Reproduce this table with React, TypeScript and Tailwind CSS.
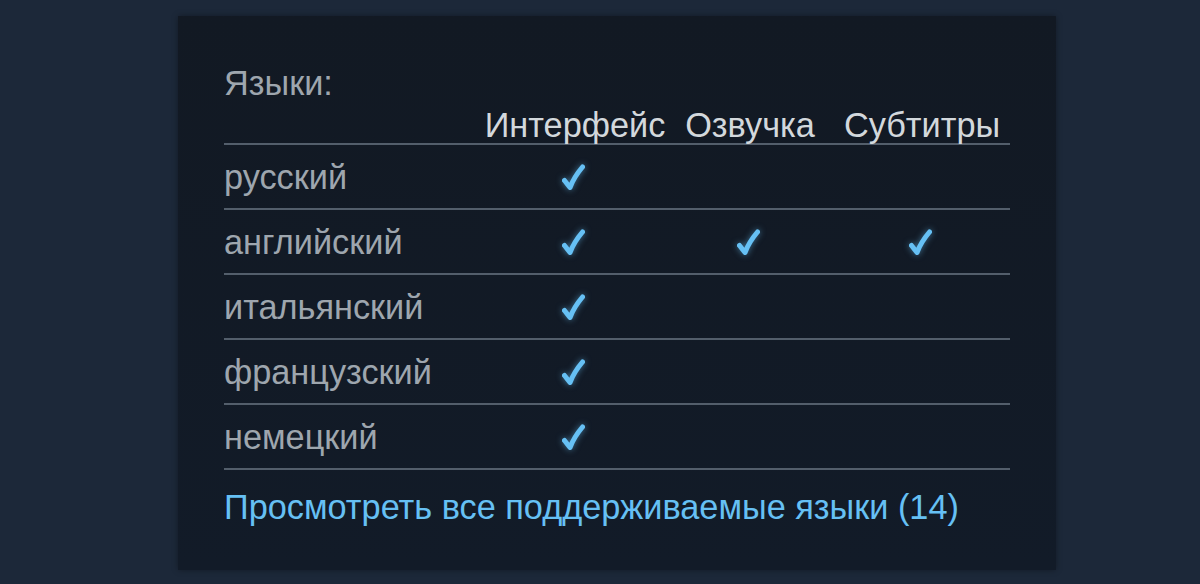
const languages = [
  { name: "русский", ui: true, voice: false, subs: false },
  { name: "английский", ui: true, voice: true, subs: true },
  { name: "итальянский", ui: true, voice: false, subs: false },
  { name: "французский", ui: true, voice: false, subs: false },
  { name: "немецкий", ui: true, voice: false, subs: false },
];

function Check() {
  return (
    <svg
      width="26"
      height="28"
      viewBox="0 0 26 28"
      className="drop-shadow-[0_0_3px_rgba(102,192,244,0.55)]"
    >
      <path
        d="M4.5 17.5 L10 24.5 Q14 14 22.5 4"
        fill="none"
        stroke="#66c0f4"
        strokeWidth="5"
        strokeLinecap="round"
        strokeLinejoin="round"
      />
    </svg>
  );
}

export default function App() {
  return (
    <div className="w-full h-[584px] bg-[#1c2839] pt-[16px] font-['Liberation_Sans',Arial,sans-serif]">
      <div className="ml-[178px] w-[878px] h-[554px] bg-gradient-to-b from-[#121923] to-[#121b28] shadow-[0_0_6px_rgba(0,0,0,0.35)] px-[46px] pt-[47px]">
        <div className="text-[34.3px] leading-[40px] text-[#9ea6ae]">Языки:</div>

        <div className="mt-[2px] grid grid-cols-[256px_190px_160px_180px] h-[40px] border-b-2 border-[#535e6b] text-[34.3px] leading-[40px] text-[#d3d8dc]">
          <div />
          <div className="text-center">Интерфейс</div>
          <div className="text-center">Озвучка</div>
          <div className="text-center pl-[4px]">Субтитры</div>
        </div>

        {languages.map((lang) => (
          <div
            key={lang.name}
            className="grid grid-cols-[256px_190px_160px_180px] h-[65px] items-center border-b-2 border-[#535e6b] text-[34.3px] leading-[40px] text-[#9ea6ae]"
          >
            <div>{lang.name}</div>
            <div className="flex justify-center pr-[4px]">{lang.ui && <Check />}</div>
            <div className="flex justify-center pr-[4px]">{lang.voice && <Check />}</div>
            <div className="flex justify-center">{lang.subs && <Check />}</div>
          </div>
        ))}

        <div className="mt-[17px] text-[34.3px] leading-[40px] text-[#66c0f4]">
          Просмотреть все поддерживаемые языки (14)
        </div>
      </div>
    </div>
  );
}
